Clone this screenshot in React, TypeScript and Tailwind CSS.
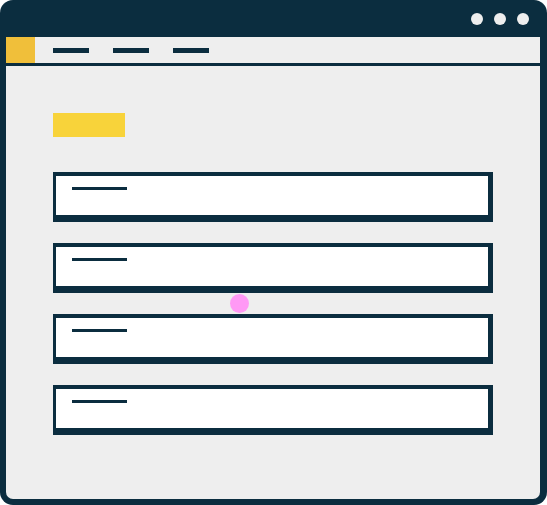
const cards = [0, 1, 2, 3];

export default function App() {
  return (
    <div className="w-[547px] h-[505px] bg-[#0b2d3f] rounded-[13px] flex flex-col font-['Liberation_Sans',sans-serif]">
      {/* title bar */}
      <div className="h-[37px] flex items-center justify-end gap-[11px] pr-[18px]">
        <span className="w-3 h-3 rounded-full bg-[#eeeeee]" />
        <span className="w-3 h-3 rounded-full bg-[#eeeeee]" />
        <span className="w-3 h-3 rounded-full bg-[#eeeeee]" />
      </div>

      <div className="flex-1 ml-[6px] mr-[7px] mb-[6px] bg-[#eeeeee] rounded-b-[7px] flex flex-col">
        {/* nav */}
        <div className="h-[29px] border-b-[3px] border-[#0b2d3f] flex">
          <div className="w-[29px] h-[26px] bg-[#f0bf3a]" />
          <div className="flex items-start pt-[11px] pl-[18px] gap-6">
            <span className="w-[36px] h-[5px] bg-[#0b2d3f]" />
            <span className="w-[36px] h-[5px] bg-[#0b2d3f]" />
            <span className="w-[36px] h-[5px] bg-[#0b2d3f]" />
          </div>
        </div>

        {/* content */}
        <div className="relative pl-[47px] pt-[47px] flex flex-col">
          <div className="w-[72px] h-[24px] bg-[#f8d33a]" />
          <div className="mt-[35px] flex flex-col gap-[21px]">
            {cards.map((i) => (
              <div
                key={i}
                className="w-[440px] h-[50px] bg-white border-[#0b2d3f] border-l-[3px] border-t-[4px] border-r-[5px] border-b-[7px] pl-4 pt-[11px]"
              >
                <div className="w-[55px] h-[3px] bg-[#0b2d3f]" />
              </div>
            ))}
          </div>
          <div className="absolute left-[224px] top-[228px] w-[19px] h-[19px] rounded-full bg-[#ff99f5]" />
        </div>
      </div>
    </div>
  );
}
